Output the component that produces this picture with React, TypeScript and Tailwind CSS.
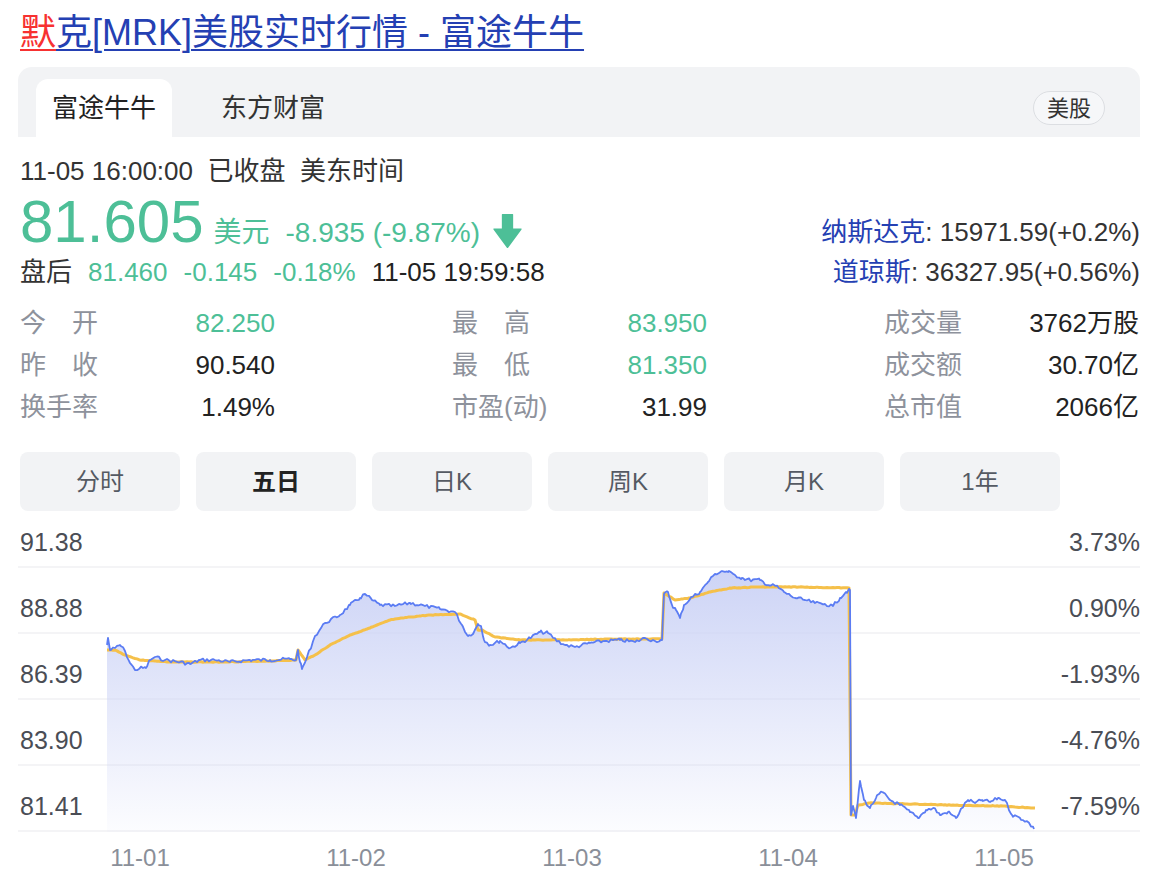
import React from 'react';

const FONT = '"Liberation Sans", "Noto Sans CJK SC", sans-serif';

type Pt = [number, number];

// price line key points, in page pixels (x, y)
const pricePts: Pt[] = [
  [107, 645], [108, 638], [110, 650], [115, 648], [120, 645], [125, 651], [130, 663], [135, 670], [140, 668],
  [146, 668], [150, 660], [155, 657], [165, 660], [180, 662], [190, 664], [200, 660], [215, 660], [230, 662],
  [250, 660], [270, 660], [290, 659], [296, 660], [298, 650], [300, 662], [302, 669], [306, 660], [315, 636],
  [325, 623], [340, 615], [350, 605], [360, 598], [365, 594], [372, 600], [380, 605], [395, 606], [410, 603],
  [425, 606], [440, 609], [455, 612], [462, 625], [468, 636], [474, 632], [478, 624], [481, 626], [484, 640],
  [490, 645], [500, 641], [510, 648], [520, 643], [530, 638], [540, 632], [548, 633], [556, 640], [565, 645],
  [575, 647], [590, 643], [605, 641], [620, 640], [635, 642], [645, 638], [655, 641], [662, 640], [664, 594],
  [668, 592], [672, 605], [676, 610], [680, 618], [684, 605], [692, 597], [700, 592], [708, 582], [715, 574],
  [722, 571], [728, 572], [735, 575], [742, 578], [750, 580], [760, 580], [768, 585], [776, 586], [784, 592],
  [795, 598], [805, 600], [815, 603], [825, 604], [833, 606], [840, 598], [846, 592], [850, 590], [851, 815],
  [853, 806], [856, 818], [860, 781], [864, 800], [870, 808], [876, 798], [882, 792], [890, 800], [900, 805],
  [910, 812], [918, 818], [926, 810], [934, 808], [940, 815], [948, 812], [956, 818], [962, 808], [968, 800],
  [975, 803], [982, 800], [990, 802], [998, 798], [1005, 800], [1012, 815], [1020, 818], [1028, 822], [1034, 829],
];

const avgPts: Pt[] = [
  [107, 650], [115, 650], [125, 655], [140, 660], [170, 662], [220, 662], [270, 661], [296, 660], [298, 650],
  [305, 660], [315, 655], [330, 645], [350, 635], [370, 628], [390, 620], [410, 617], [430, 615], [460, 614],
  [475, 620], [478, 630], [482, 630], [495, 637], [520, 640], [560, 640], [620, 639], [662, 639], [664, 593],
  [675, 600], [690, 598], [710, 592], [730, 588], [760, 587], [800, 587], [849, 588], [851, 815], [855, 815],
  [858, 805], [870, 803], [950, 805], [1000, 806], [1035, 808],
];

function interp(pts: Pt[], x: number) {
  for (let i = 1; i < pts.length; i++) {
    if (x <= pts[i][0]) {
      const [x0, y0] = pts[i - 1];
      const [x1, y1] = pts[i];
      const t = x1 === x0 ? 1 : (x - x0) / (x1 - x0);
      return y0 + (y1 - y0) * t;
    }
  }
  return pts[pts.length - 1][1];
}

function buildLine(pts: Pt[], noise: number, seed: number) {
  let s = seed;
  const rnd = () => {
    s = (s * 9301 + 49297) % 233280;
    return s / 233280 - 0.5;
  };
  const out: Pt[] = [];
  // keep all key points so the jumps stay sharp
  const xs = new Set<number>(pts.map((p) => p[0]));
  for (let x = pts[0][0]; x <= pts[pts.length - 1][0]; x += 2) xs.add(x);
  const sorted = Array.from(xs).sort((a, b) => a - b);
  for (const x of sorted) {
    const key = pts.find((p) => p[0] === x);
    const y = key ? key[1] : interp(pts, x) + rnd() * noise;
    out.push([x, y]);
  }
  return out;
}

const priceLine = buildLine(pricePts, 3.4, 7);
const avgLine = buildLine(avgPts, 0.6, 3);

const toPath = (pts: Pt[]) => pts.map((p, i) => `${i ? 'L' : 'M'}${p[0].toFixed(1)} ${p[1].toFixed(1)}`).join(' ');

const areaPath = `${toPath(priceLine)} L1034 832 L107 832 Z`;

const stats = [
  [
    { label: '今开', value: '82.250', green: true, spread: true },
    { label: '最高', value: '83.950', green: true, spread: true },
    { label: '成交量', value: '3762万股' },
  ],
  [
    { label: '昨收', value: '90.540', spread: true },
    { label: '最低', value: '81.350', green: true, spread: true },
    { label: '成交额', value: '30.70亿' },
  ],
  [
    { label: '换手率', value: '1.49%' },
    { label: '市盈(动)', value: '31.99' },
    { label: '总市值', value: '2066亿' },
  ],
];

const ranges = ['分时', '五日', '日K', '周K', '月K', '1年'];
const yRows = [
  ['91.38', '3.73%'],
  ['88.88', '0.90%'],
  ['86.39', '-1.93%'],
  ['83.90', '-4.76%'],
  ['81.41', '-7.59%'],
];
const xDates = ['11-01', '11-02', '11-03', '11-04', '11-05'];

function DownArrow() {
  return (
    <svg width="31" height="36" viewBox="0 0 30 35" className="ml-[12px] self-end mb-[6px]">
      <path d="M9.5 1.5 Q9.5 1 10 1 H20 Q20.5 1 20.5 1.5 V15 H28 Q29.5 15 28.5 16.2 L15.8 33.5 Q15 34.5 14.2 33.5 L1.5 16.2 Q0.5 15 2 15 H9.5 Z" fill="#4dbf97" />
    </svg>
  );
}

export default function App() {
  return (
    <div className="w-[1160px] h-[890px] bg-white px-[20px] overflow-hidden" style={{ fontFamily: FONT }}>
      {/* title link */}
      <div className="pt-[11px] text-[36px] leading-[44px] whitespace-nowrap">
        <span className="text-[#f73131] underline decoration-[2px] underline-offset-[4px]">默</span>
        <span className="text-[#2440b3] underline decoration-[2px] underline-offset-[4px]">克[MRK]美股实时行情 - 富途牛牛</span>
      </div>

      {/* source tabs */}
      <div className="mt-[12px] -ml-[2px] h-[70px] bg-[#f2f3f5] rounded-t-[14px] flex pl-[18px] pr-[35px]">
        <div className="mt-[12px] h-[58px] px-[16px] bg-white rounded-t-[12px] flex items-center text-[26px] text-[#222]">富途牛牛</div>
        <div className="ml-[33px] mt-[12px] h-[58px] px-[16px] flex items-center text-[26px] text-[#333]">东方财富</div>
        <div className="ml-auto self-end mb-[12px] h-[34px] px-[13px] rounded-full border border-[#dcdee2] bg-[#f6f7f9] flex items-center text-[22px] text-[#333]">美股</div>
      </div>

      {/* quote */}
      <div className="mt-[17px] text-[26px] leading-[34px] text-[#333] whitespace-nowrap">11-05 16:00:00&nbsp;&nbsp;已收盘&nbsp;&nbsp;美东时间</div>
      <div className="flex justify-between">
        <div>
          <div className="flex items-baseline h-[67px] text-[#4dbf97] whitespace-nowrap">
            <span className="text-[60px] leading-[67px]">81.605</span>
            <span className="ml-[10px] text-[28px]">美元</span>
            <span className="ml-[16px] text-[28px]">-8.935 (-9.87%)</span>
            <DownArrow />
          </div>
          <div className="text-[26px] leading-[34px] whitespace-nowrap flex">
            <span className="text-[#333]">盘后</span>
            <span className="ml-[16px] text-[#4dbf97]">81.460</span>
            <span className="ml-[16px] text-[#4dbf97]">-0.145</span>
            <span className="ml-[16px] text-[#4dbf97]">-0.18%</span>
            <span className="ml-[16px] text-[#222]">11-05 19:59:58</span>
          </div>
        </div>
        <div className="self-end mb-[-3px] flex flex-col items-end text-[26px] leading-[40px] whitespace-nowrap">
          <div>
            <span className="text-[#2440b3]">纳斯达克</span>
            <span className="text-[#333]">: 15971.59(+0.2%)</span>
          </div>
          <div>
            <span className="text-[#2440b3]">道琼斯</span>
            <span className="text-[#333]">: 36327.95(+0.56%)</span>
          </div>
        </div>
      </div>

      {/* stats */}
      <div className="mt-[13px]">
        {stats.map((row, i) => (
          <div key={i} className="grid grid-cols-[255px_255px_255px] gap-x-[177px] h-[42px] items-center text-[26px]">
            {row.map((c) => (
              <div key={c.label} className="flex justify-between items-center">
                {c.spread ? (
                  <span className="w-[78px] flex justify-between text-[#8e929c]">
                    <span>{c.label[0]}</span>
                    <span>{c.label[1]}</span>
                  </span>
                ) : (
                  <span className="text-[#8e929c]">{c.label}</span>
                )}
                <span className={c.green ? 'text-[#4dbf97]' : 'text-[#222]'}>{c.value}</span>
              </div>
            ))}
          </div>
        ))}
      </div>

      {/* range buttons */}
      <div className="mt-[24px] flex gap-[16px]">
        {ranges.map((r) => (
          <div
            key={r}
            className={`w-[160px] h-[59px] rounded-[8px] bg-[#f2f3f5] flex items-center justify-center text-[24px] ${
              r === '五日' ? 'font-bold text-[#222]' : 'text-[#555a63]'
            }`}
          >
            {r}
          </div>
        ))}
      </div>

      {/* chart */}
      <div className="relative -ml-[2px]">
        {yRows.map(([l, r], i) => (
          <div
            key={l}
            className={`${i === 0 ? 'h-[57px]' : 'h-[66px]'} border-b-[2px] border-[#f4f4f6] flex justify-between items-end pb-[8px] pl-[2px] text-[25px] leading-[32px] text-[#4a4d55]`}
          >
            <span>{l}</span>
            <span>{r}</span>
          </div>
        ))}
        <svg className="absolute left-0 top-0" width="1122" height="321" viewBox="18 511 1122 321">
          <defs>
            <linearGradient id="fill" x1="0" y1="570" x2="0" y2="832" gradientUnits="userSpaceOnUse">
              <stop offset="0" stopColor="#cdd4f6" />
              <stop offset="1" stopColor="#cdd4f6" stopOpacity="0.06" />
            </linearGradient>
          </defs>
          <path d={areaPath} fill="url(#fill)" />
          <path d={toPath(avgLine)} fill="none" stroke="#f5c04a" strokeWidth="3" strokeLinejoin="round" />
          <path d={toPath(priceLine)} fill="none" stroke="#5b7cf3" strokeWidth="1.8" strokeLinejoin="round" />
        </svg>
      </div>
      <div className="flex pl-[12px] pt-[10px] text-[24px] leading-[32px] text-[#8a8f99]">
        {xDates.map((d) => (
          <div key={d} className="w-[216px] text-center">
            {d}
          </div>
        ))}
      </div>
    </div>
  );
}
